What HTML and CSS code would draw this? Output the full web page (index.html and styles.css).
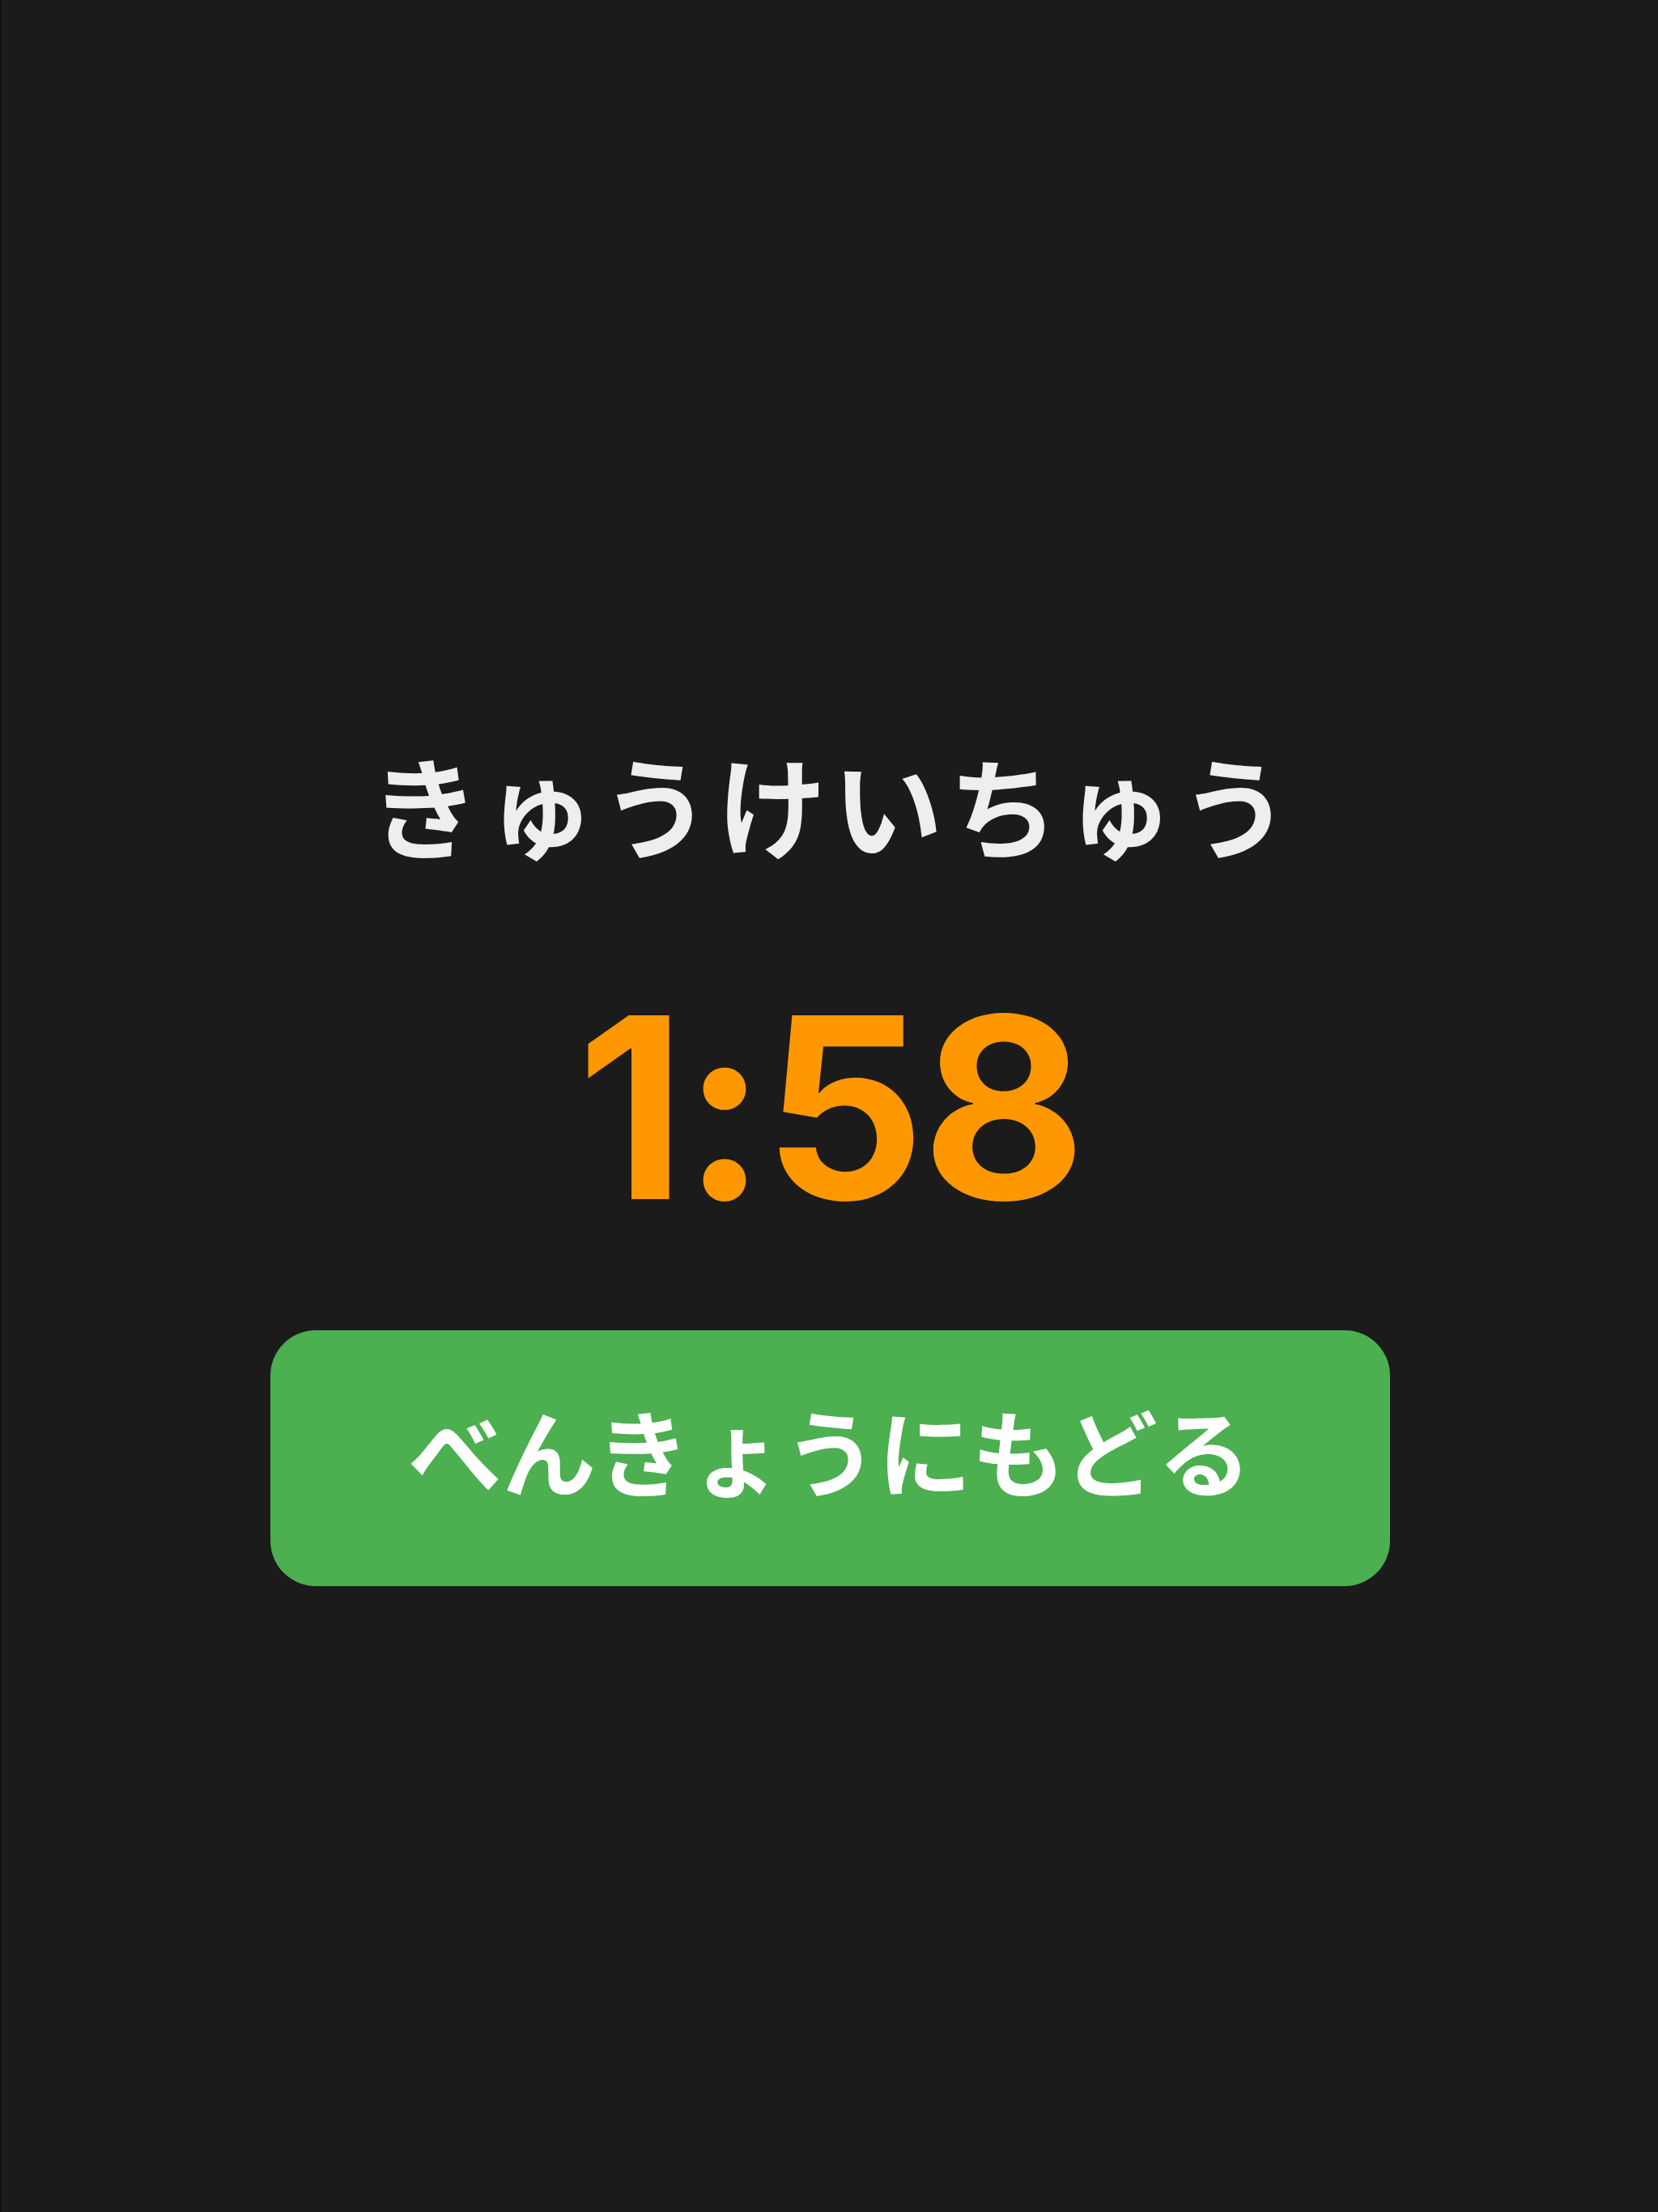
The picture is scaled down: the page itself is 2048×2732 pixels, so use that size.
FILE: index.html
```html
<!DOCTYPE html>
<html lang="en">
<head>
<meta charset="utf-8">
<title>きゅうけいちゅう</title>
<link rel="stylesheet" href="styles.css">
</head>
<body>
<main class="screen">
  <h1 class="title" lang="ja">きゅうけいちゅう</h1>
  <div class="timer">1:58</div>
  <button class="back-btn" lang="ja">べんきょうにもどる</button>
</main>
</body>
</html>
```

FILE: styles.css
```css
html, body {
  margin: 0;
  padding: 0;
  background: #1b1b1b;
}
body {
  min-height: 2732px;
  border-left: 2px solid #111111;
  box-sizing: border-box;
}
.screen {
  display: flex;
  flex-direction: column;
  align-items: center;
  padding-top: 924px;
}
.title {
  margin: 0;
  font-family: "Noto Sans CJK JP", sans-serif;
  font-weight: 700;
  font-size: 136px;
  letter-spacing: 7px;
  text-indent: 7px;
  line-height: 1;
  color: #eeeeee;
}
.timer {
  margin-top: 152px;
  font-family: "Inter", "Roboto", sans-serif;
  font-weight: 700;
  font-size: 312px;
  line-height: 1;
  letter-spacing: -4px;
  color: #ff9800;
}
.back-btn {
  margin-top: 119px;
  width: 1383px;
  height: 316px;
  border: none;
  border-radius: 56px;
  background: #4caf50;
  color: #ffffff;
  font-family: "Noto Sans CJK JP", sans-serif;
  font-weight: 700;
  font-size: 116px;
  line-height: 1;
  display: flex;
  align-items: center;
  justify-content: center;
  padding: 0 0 24px 0;
}
```
